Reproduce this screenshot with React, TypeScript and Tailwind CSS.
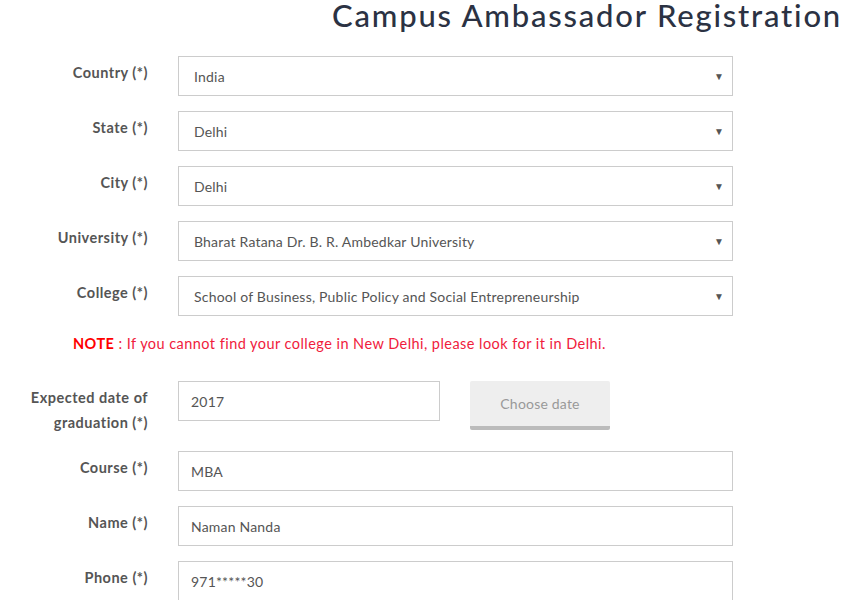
import React from "react";

const selects = [
  { label: "Country (*)", value: "India" },
  { label: "State (*)", value: "Delhi" },
  { label: "City (*)", value: "Delhi" },
  { label: "University (*)", value: "Bharat Ratana Dr. B. R. Ambedkar University" },
  { label: "College (*)", value: "School of Business, Public Policy and Social Entrepreneurship" },
];

const inputs = [
  { label: "Course (*)", value: "MBA" },
  { label: "Name (*)", value: "Naman Nanda" },
  { label: "Phone (*)", value: "971*****30" },
];

const Label = ({ children }: { children: React.ReactNode }) => (
  <div className="w-[148px] shrink-0 pt-[4px] text-right text-[14.5px] font-bold leading-[25px] tracking-[0.5px] text-[#555]">
    {children}
  </div>
);

const SelectBox = ({ value }: { value: string }) => (
  <div className="flex h-[40px] w-[555px] items-center justify-between border border-[#ccc] bg-white pl-[15px] pr-[8px] text-[14px] tracking-[0.2px] text-[#555]">
    <span>{value}</span>
    <span className="text-[10px] text-[#555]">▼</span>
  </div>
);

const TextBox = ({ value, w = "w-[555px]" }: { value: string; w?: string }) => (
  <div className={`flex h-[40px] ${w} items-center border border-[#ccc] bg-white pl-[12px] text-[14px] tracking-[0.2px] text-[#555]`}>
    {value}
  </div>
);

export default function App() {
  return (
    <div className="min-h-screen bg-white font-['Lato',sans-serif]">
      <h1 className="h-[56px] pr-[12px] text-right text-[31px] font-medium leading-[30px] tracking-[1.8px] text-[#2b3243]">
        Campus Ambassador Registration
      </h1>

      {selects.map((s) => (
        <div key={s.label} className="mb-[15px] flex gap-[30px]">
          <Label>{s.label}</Label>
          <SelectBox value={s.value} />
        </div>
      ))}

      <p className="mb-[26px] mt-[17px] pl-[73px] text-[14.5px] leading-[22px] tracking-[0.45px] text-[#f0203c]">
        <span className="font-bold text-[#ff0000]">NOTE</span> : If you cannot find your college in New Delhi, please look for it in Delhi.
      </p>

      <div className="mb-[16px] flex gap-[30px]">
        <Label>
          Expected date of
          <br />
          graduation (*)
        </Label>
        <TextBox value="2017" w="w-[262px]" />
        <button className="h-[49px] w-[140px] rounded-[2px] border-b-[4px] border-[#bbb] bg-[#eee] text-[14px] tracking-[0.2px] text-[#999]">
          Choose date
        </button>
      </div>

      {inputs.map((s) => (
        <div key={s.label} className="mb-[15px] flex gap-[30px]">
          <Label>{s.label}</Label>
          <TextBox value={s.value} />
        </div>
      ))}
    </div>
  );
}
